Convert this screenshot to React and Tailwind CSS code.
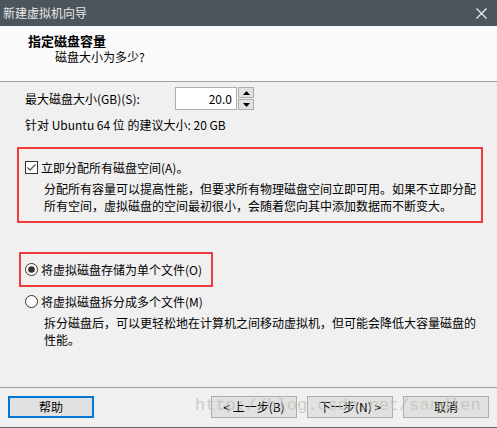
import React from 'react';

const font = { fontFamily: '"Noto Sans CJK SC", "Noto Sans", sans-serif' };

const Checkbox = () => (
    <svg width="13" height="13" viewBox="0 0 13 13" className="shrink-0">
        <rect x="0.5" y="0.5" width="12" height="12" fill="#fff" stroke="#333" />
        <path d="M2.5 6.5 L5 9 L10.5 3.5" fill="none" stroke="#555" strokeWidth="1.3" />
    </svg>
);

const Radio = ({ checked }) => (
    <svg width="13" height="13" viewBox="0 0 13 13" className="shrink-0">
        <circle cx="6.5" cy="6.5" r="6" fill="#fff" stroke="#333" />
        {checked && <circle cx="6.5" cy="6.5" r="3.3" fill="#333" />}
    </svg>
);

const Button = ({ children, primary }) => (
    <div className={`w-[86px] h-[22px] flex items-center justify-center bg-[#e1e1e1] text-black ${primary ? 'border-2 border-[#0078d7]' : 'border border-[#adadad]'}`}>
        {children}
    </div>
);

export default function App() {
    return (
        <div className="w-[497px] h-[428px] flex flex-col bg-[#f0f0f0] text-[12px] leading-[16px] text-black overflow-hidden" style={font}>
            {/* title bar */}
            <div className="h-[26px] shrink-0 bg-[#4c555c] flex items-center justify-between pl-[3px] pr-[10px]">
                <span className="text-[#e8e8e8]">新建虚拟机向导</span>
                <svg width="11" height="11" viewBox="0 0 11 11">
                    <path d="M0.5 0.5 L10.5 10.5 M10.5 0.5 L0.5 10.5" stroke="#f0f0f0" strokeWidth="1.2" />
                </svg>
            </div>

            {/* header */}
            <div className="h-[56px] shrink-0 bg-[#fafafa] border-b border-[#a0a0a0] pt-[7px]">
                <div className="pl-[28px] font-bold text-[13px]">指定磁盘容量</div>
                <div className="pl-[55px]">磁盘大小为多少?</div>
            </div>

            {/* body */}
            <div className="flex-1 flex flex-col">
                <div className="mt-[5px] h-[23px] flex items-center pl-[25px]">
                    <span className="w-[150px]">最大磁盘大小(GB)(S):</span>
                    <div className="w-[62px] h-[23px] bg-white border border-[#adadad] flex items-center justify-end pr-[4px]">20.0</div>
                    <div className="w-[16px] h-[23px] flex flex-col ml-[1px]">
                        <div className="h-[11px] bg-[#e1e1e1] border border-[#adadad] flex items-center justify-center">
                            <svg width="7" height="4" viewBox="0 0 7 4"><path d="M3.5 0 L7 4 L0 4 Z" fill="#000" /></svg>
                        </div>
                        <div className="h-[11px] mt-[1px] bg-[#e1e1e1] border border-[#adadad] flex items-center justify-center">
                            <svg width="7" height="4" viewBox="0 0 7 4"><path d="M0 0 L7 0 L3.5 4 Z" fill="#000" /></svg>
                        </div>
                    </div>
                </div>
                <div className="mt-[7px] pl-[25px]">针对 Ubuntu 64 位 的建议大小: 20 GB</div>

                <div className="mt-[14px] ml-[17px] w-[466px] h-[76px] border-2 border-[#f03c3c]">
                    <div className="mt-[12px] pl-[6px] h-[13px] flex items-center gap-[3px]">
                        <Checkbox />
                        <span>立即分配所有磁盘空间(A)。</span>
                    </div>
                    <div className="mt-[6px] pl-[25px] leading-[17px]">
                        <div>分配所有容量可以提高性能，但要求所有物理磁盘空间立即可用。如果不立即分配</div>
                        <div>所有空间，虚拟磁盘的空间最初很小，会随着您向其中添加数据而不断变大。</div>
                    </div>
                </div>

                <div className="mt-[29px] ml-[19px] w-[194px] h-[35px] border-2 border-[#f03c3c] flex items-center pl-[4px] gap-[3px]">
                    <Radio checked />
                    <span>将虚拟磁盘存储为单个文件(O)</span>
                </div>

                <div className="mt-[8px] pl-[25px] h-[13px] flex items-center gap-[3px]">
                    <Radio />
                    <span>将虚拟磁盘拆分成多个文件(M)</span>
                </div>
                <div className="mt-[6px] pl-[44px] leading-[17px]">
                    <div>拆分磁盘后，可以更轻松地在计算机之间移动虚拟机，但可能会降低大容量磁盘的</div>
                    <div>性能。</div>
                </div>
            </div>

            {/* footer */}
            <div className="relative h-[41px] shrink-0 border-t border-[#a0a0a0] border-b border-b-[#646464] px-[8px] pt-[8px] flex justify-between">
                <Button primary>帮助</Button>
                <div className="flex gap-[10px]">
                    <Button>&lt; 上一步(B)</Button>
                    <Button>下一步(N) &gt;</Button>
                    <Button>取消</Button>
                </div>
                <div className="absolute left-[195px] top-[7px] text-[17px] leading-[22px] text-[#bcbcb2]/70 pointer-events-none" style={{ fontFamily: '"Liberation Mono", monospace' }}>
                    http://blog.csdn.net/sandlen
                </div>
            </div>
        </div>
    );
}
